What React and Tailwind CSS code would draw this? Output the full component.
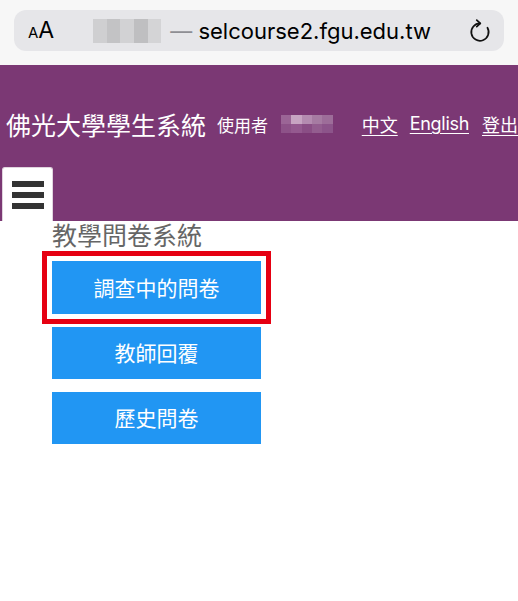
export default function App() {
  const cjk = { fontFamily: '"Noto Sans CJK TC", "Noto Sans", sans-serif' };
  const latin = { fontFamily: 'Inter, "Liberation Sans", sans-serif' };
  return (
    <div className="w-[518px] h-[601px] bg-white overflow-hidden" style={cjk}>
      {/* Browser bar */}
      <div className="h-[65px] bg-[#f7f7f7] pt-[10px] px-[14px]">
        <div className="h-[41px] rounded-[12px] bg-[#e6e6e9] flex items-center pl-[14px] pr-[12px]">
          <div className="flex items-baseline text-black" style={latin}>
            <span className="text-[15px] leading-none">A</span>
            <span className="text-[23px] leading-none">A</span>
          </div>
          <div className="ml-[39px] grid grid-cols-5 w-[68px] h-[24px]">
            <div className="bg-[#cfcfd1]" />
            <div className="bg-[#c3c3c5]" />
            <div className="bg-[#d2d2d4]" />
            <div className="bg-[#bfbfc1]" />
            <div className="bg-[#d4d4d6]" />
          </div>
          <span className="ml-[9px] text-[22px] leading-none text-black whitespace-nowrap" style={latin}>
            <span className="text-[#8e8e93]">—</span> selcourse2.fgu.edu.tw
          </span>
          <svg className="ml-auto" width="24" height="26" viewBox="0 0 22 24" fill="none" stroke="#111" strokeWidth="1.6" strokeLinecap="round" strokeLinejoin="round">
            <path d="M11 5 A8 8 0 1 0 17.9 9" />
            <path d="M8 2 L11.3 5 L8 8" />
          </svg>
        </div>
      </div>

      {/* Purple header */}
      <div className="h-[156px] bg-[#7b3874] flex flex-col">
        <div className="mt-[44px] flex items-center text-white whitespace-nowrap h-[30px]">
          <span className="ml-[6px] text-[25px] leading-none">佛光大學學生系統</span>
          <span className="ml-[11px] text-[17px] leading-none">使用者</span>
          <div className="ml-[13px] grid grid-cols-5 grid-rows-2 w-[54px] h-[18px]">
            <div className="bg-[#9b6596]" />
            <div className="bg-[#c7a4c2]" />
            <div className="bg-[#b48bb0]" />
            <div className="bg-[#a67ba2]" />
            <div className="bg-[#9d6d99]" />
            <div className="bg-[#8d5288]" />
            <div className="bg-[#94598f]" />
            <div className="bg-[#8a4e85]" />
            <div className="bg-[#935d8f]" />
            <div className="bg-[#8c548a]" />
          </div>
          <span className="ml-[29px] text-[18px] leading-none underline underline-offset-[3px]">中文</span>
          <span className="ml-[12px] text-[18px] leading-none underline underline-offset-[3px] tracking-[-0.3px]" style={latin}>English</span>
          <span className="ml-[13px] text-[18px] leading-none underline underline-offset-[3px]">登出</span>
        </div>
        <div className="mt-auto ml-[2px] w-[51px] h-[54px] bg-white rounded-tr-[3px] rounded-tl-[3px] border border-[#e0d4de] border-b-0 flex flex-col justify-center items-center gap-[5px]">
          <div className="w-[32px] h-[6px] bg-[#333]" />
          <div className="w-[32px] h-[6px] bg-[#333]" />
          <div className="w-[32px] h-[6px] bg-[#333]" />
        </div>
      </div>

      {/* Content */}
      <div className="pl-[52px]">
        <div className="text-[25px] leading-[30px] text-[#666] -mt-[2px]">教學問卷系統</div>
        <div className="mt-[12px] flex flex-col gap-[13px] w-[209px]">
          <div className="h-[53px] bg-[#2196f3] text-white text-[21px] flex items-center justify-center outline-[5px] outline-solid outline-[#e60012] outline-offset-[5px]">
            調查中的問卷
          </div>
          <div className="h-[52px] bg-[#2196f3] text-white text-[21px] flex items-center justify-center">
            教師回覆
          </div>
          <div className="h-[52px] bg-[#2196f3] text-white text-[21px] flex items-center justify-center">
            歷史問卷
          </div>
        </div>
      </div>
    </div>
  );
}
